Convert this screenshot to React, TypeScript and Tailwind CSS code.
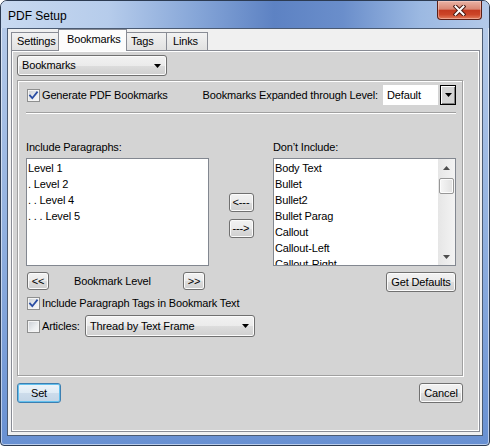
import React from "react";

// Win7 style push button / combo face
const face =
  "rounded-[3px] border border-[#707070] bg-[linear-gradient(180deg,#f2f2f2_0%,#ebebeb_50%,#dddddd_51%,#cfcfcf_100%)] shadow-[inset_0_0_0_1px_#fbfbfb]";

function Tri({ up = false, color = "#000" }: { up?: boolean; color?: string }) {
  return (
    <svg width="7" height="4" viewBox="0 0 7 4">
      <path d={up ? "M0 4H7L3.5 0Z" : "M0 0H7L3.5 4Z"} fill={color} />
    </svg>
  );
}

function CheckBox({ checked = false }: { checked?: boolean }) {
  return (
    <span className="w-[13px] h-[13px] shrink-0 border border-[#8e8f8f] bg-[linear-gradient(135deg,#c9ced4_0%,#eceef0_60%,#f8f8f8_100%)] shadow-[inset_0_0_0_1px_#f4f4f4] flex items-center justify-center">
      {checked && (
        <svg width="11" height="11" viewBox="0 0 11 11">
          <path d="M2 5.6L4.3 8.2L9 2.3" fill="none" stroke="#2a4da3" strokeWidth="1.8" strokeLinecap="square" />
        </svg>
      )}
    </span>
  );
}

function Btn({ label, className = "" }: { label: string; className?: string }) {
  return <div className={`${face} flex items-center justify-center shrink-0 ${className}`}>{label}</div>;
}

function Combo({ label, className = "" }: { label: string; className?: string }) {
  return (
    <div className={`${face} flex items-center justify-between pl-[4px] pr-[5px] shrink-0 ${className}`}>
      <span>{label}</span>
      <Tri />
    </div>
  );
}

const INCLUDE = ["Level 1", ". Level 2", ". . Level 4", ". . . Level 5"];
const EXCLUDE = ["Body Text", "Bullet", "Bullet2", "Bullet Parag", "Callout", "Callout-Left", "Callout-Right"];

export default function App() {
  return (
    <div className="w-[490px] h-[446px] bg-white font-['Liberation_Sans',Arial,sans-serif] text-[11px] leading-[13px] tracking-[-0.15px] text-black">
      <div className="w-[490px] h-[446px] flex flex-col border border-[#2c3b52] rounded-t-[7px] rounded-b-[4px] overflow-hidden bg-[linear-gradient(180deg,#b9cdea_0%,#93b2e0_50%,#6890d2_100%)] shadow-[inset_0_0_0_1px_rgba(255,255,255,0.55)]">
        {/* title bar */}
        <div className="h-[27px] shrink-0 flex items-start justify-between bg-[linear-gradient(90deg,#c8d9f0_0%,#b6cceb_22%,#86a6d8_40%,#5d82c3_56%,#6a8ecb_70%,#9cb9e2_86%,#b3c9e9_100%)]">
          <div className="pl-[7px] pt-[8px] text-[12px] leading-[14px] tracking-normal">PDF Setup</div>
          <div className="mr-[7px] w-[45px] h-[19px] rounded-b-[4px] border border-t-0 border-[#5b1f16] bg-[linear-gradient(180deg,#e9b3a5_0%,#d98774_45%,#c43a20_52%,#cc4528_75%,#e27c5c_100%)] shadow-[inset_0_0_0_1px_rgba(255,220,210,0.45)] flex items-center justify-center">
            <svg width="13" height="11" viewBox="0 0 13 11">
              <path d="M2.5 1.5L10.5 9.5M10.5 1.5L2.5 9.5" stroke="#4a1a12" strokeWidth="4" strokeLinecap="square" />
              <path d="M2.5 1.5L10.5 9.5M10.5 1.5L2.5 9.5" stroke="#fff" strokeWidth="2" strokeLinecap="square" />
            </svg>
          </div>
        </div>

        {/* client area */}
        <div className="mx-[6px] h-[408px] shrink-0 border border-[#4a5a72] bg-[#f0f0f0] pl-[3px] pr-[2px] pb-[3px] flex flex-col">
          {/* tabs */}
          <div className="h-[21px] shrink-0 flex items-end">
            <div className="w-[48px] h-[18px] pl-[5px] pt-[2px] border border-b-0 border-[#898c95] bg-[linear-gradient(180deg,#f2f2f2,#e1e1e1)]">Settings</div>
            <div className="relative z-10 -ml-[1px] -mb-[1px] w-[69px] h-[22px] pl-[8px] pt-[3px] border border-b-0 border-[#898c95] bg-[#fcfcfc]">Bookmarks</div>
            <div className="-ml-[1px] w-[41px] h-[18px] pl-[4px] pt-[2px] border border-b-0 border-[#898c95] bg-[linear-gradient(180deg,#f2f2f2,#e1e1e1)]">Tags</div>
            <div className="-ml-[1px] w-[42px] h-[18px] pl-[6px] pt-[2px] border border-b-0 border-[#898c95] bg-[linear-gradient(180deg,#f2f2f2,#e1e1e1)]">Links</div>
          </div>

          {/* tab panel */}
          <div className="flex-1 border border-[#898c95] bg-[#d4d4d4] shadow-[inset_0_0_0_1px_#ffffff] pl-[5px] pt-[4px] flex flex-col">
            <Combo label="Bookmarks" className="w-[150px] h-[21px]" />

            {/* group box */}
            <div className="mt-[4px] w-[446px] h-[296px] border border-[#a0a0a0] shadow-[inset_1px_1px_0_#fff,1px_1px_0_#fff] pl-[8px] pr-[6px] pt-[4px] flex flex-col">
              <div className="h-[20px] flex items-center">
                <span className="ml-[1px]"><CheckBox checked /></span>
                <span className="ml-[2px]">Generate PDF Bookmarks</span>
                <span className="ml-auto">Bookmarks Expanded through Level:</span>
                <div className="ml-[5px] w-[55px] h-[20px] bg-white pl-[4px] flex items-center">Default</div>
                <div className="ml-[2px] w-[16px] h-[20px] border border-black bg-[#d4d4d4] shadow-[inset_1px_1px_0_#fff,inset_-1px_-1px_0_#808080] flex items-center justify-center">
                  <Tri />
                </div>
              </div>

              <div className="mt-[7px] border-t border-b border-t-[#a0a0a0] border-b-white" />

              <div className="mt-[27px] flex">
                <div className="w-[183px]">Include Paragraphs:</div>
                <div className="w-[64px]" />
                <div className="w-[183px]">Don’t Include:</div>
              </div>

              <div className="mt-[4px] h-[108px] flex">
                <div className="w-[183px] border border-[#828790] bg-white pl-[1px] pt-[1px] leading-[16px]">
                  {INCLUDE.map((t) => (
                    <div key={t}>{t}</div>
                  ))}
                </div>
                <div className="w-[64px] flex flex-col items-center pt-[35px] gap-[7px]">
                  <Btn label="<---" className="w-[25px] h-[19px]" />
                  <Btn label="--->" className="w-[25px] h-[19px]" />
                </div>
                <div className="w-[183px] border border-[#828790] bg-white flex">
                  <div className="flex-1 overflow-hidden pl-[1px] pt-[1px] leading-[16px]">
                    {EXCLUDE.map((t) => (
                      <div key={t}>{t}</div>
                    ))}
                  </div>
                  <div className="w-[17px] flex flex-col bg-[linear-gradient(90deg,#e6e6e6,#f3f3f3)]">
                    <div className="h-[17px] flex items-center justify-center">
                      <Tri up color="#4d4d4d" />
                    </div>
                    <div className="flex-1 px-[1px] pt-[2px]">
                      <div className="h-[16px] rounded-[2px] border border-[#979797] bg-[linear-gradient(90deg,#f6f6f6,#e1e1e1)] shadow-[inset_0_0_0_1px_#fcfcfc]" />
                    </div>
                    <div className="h-[17px] flex items-center justify-center">
                      <Tri color="#4d4d4d" />
                    </div>
                  </div>
                </div>
              </div>

              <div className="mt-[6px] h-[20px] flex items-start">
                <div className="w-[183px] flex items-center">
                  <Btn label="<<" className="ml-[1px] w-[22px] h-[18px]" />
                  <span className="ml-[25px]">Bookmark Level</span>
                  <Btn label=">>" className="ml-auto mr-[4px] w-[22px] h-[18px]" />
                </div>
                <div className="w-[64px]" />
                <div className="w-[183px] flex justify-end">
                  <Btn label="Get Defaults" className="w-[70px] h-[20px]" />
                </div>
              </div>

              <div className="mt-[5px] h-[13px] flex items-center">
                <span className="ml-[1px]"><CheckBox checked /></span>
                <span className="ml-[2px]">Include Paragraph Tags in Bookmark Text</span>
              </div>

              <div className="mt-[5px] h-[22px] flex items-center">
                <span className="ml-[1px]"><CheckBox /></span>
                <span className="ml-[2px] w-[43px]">Articles:</span>
                <Combo label="Thread by Text Frame" className="w-[170px] h-[22px]" />
              </div>
            </div>

            {/* dialog buttons */}
            <div className="mt-[7px] w-[446px] flex justify-between">
              <div className="w-[44px] h-[20px] rounded-[3px] border border-[#3c7fb1] bg-[linear-gradient(180deg,#eef5fa_0%,#dfebf5_50%,#cddceb_51%,#c3d5e6_100%)] shadow-[inset_0_0_0_1px_#62c0ee] flex items-center justify-center">
                Set
              </div>
              <Btn label="Cancel" className="w-[44px] h-[20px]" />
            </div>
          </div>
        </div>
      </div>
    </div>
  );
}
